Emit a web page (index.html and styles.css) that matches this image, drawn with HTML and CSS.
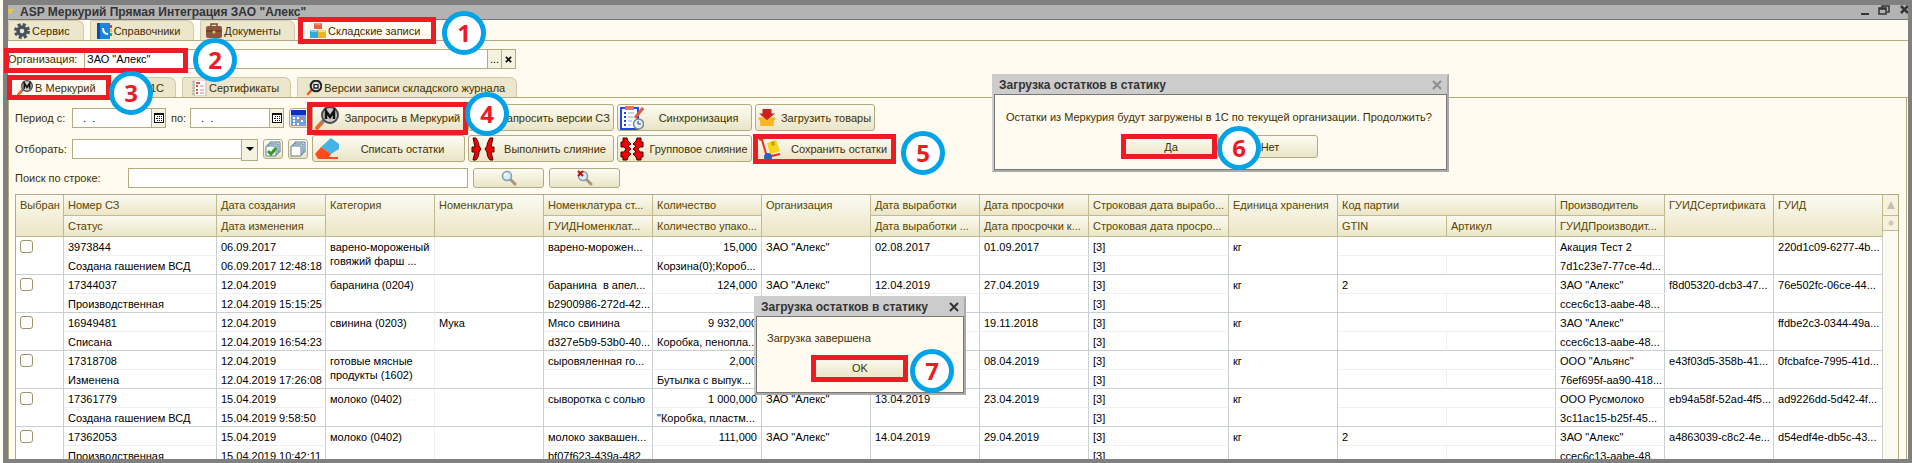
FILE: index.html
```html
<!DOCTYPE html>
<html lang="ru">
<head>
    <meta charset="UTF-8">
    <meta name="viewport" content="width=device-width, initial-scale=1.0">
    <title>ASP Меркурий Прямая Интеграция</title>
    <link rel="stylesheet" href="styles.css">
</head>
<body>
    <!-- Shared icons -->
    <svg class="sprite" aria-hidden="true">
        <symbol id="lens-m" viewBox="0 0 24 24">
            <path d="M9 14 L2 22" stroke="#f26522" stroke-width="4" stroke-linecap="round"/>
            <path d="M9 14 L6 17.500" stroke="#888" stroke-width="3"/>
            <circle cx="15" cy="9" r="8" fill="#c9c9c9" stroke="#4a4a4a" stroke-width="2"/>
            <path d="M11 13 V5 L15 11 L19 5 V13" fill="none" stroke="#111" stroke-width="2.500"/>
        </symbol>
        <symbol id="lens" viewBox="0 0 16 16">
            <path d="M9 9 L14 14" stroke="#a8977c" stroke-width="3" stroke-linecap="round"/>
            <circle cx="6" cy="6" r="4.500" fill="#d6ecfa" stroke="#8a9aa8" stroke-width="1.500"/>
            <path d="M3.500 5.500 A3 3 0 0 1 6 3.500" fill="none" stroke="#fff" stroke-width="1.500"/>
        </symbol>
        <symbol id="calendar" viewBox="0 0 10 10">
            <path d="M0 0 H10 V10 H0 Z" fill="#111"/>
            <path d="M1 2h8v7h-8z" fill="#fff"/>
            <path d="M3 3h1v1h-1z M5 3h1v1h-1z M7 3h1v1h-1z M2 5h1v1h-1z M3 5h1v1h-1z M5 5h1v1h-1z M7 5h1v1h-1z M3 7h1v1h-1z M5 7h1v1h-1z M7 7h1v1h-1z" fill="#111"/>
        </symbol>
        <symbol id="pages" viewBox="0 0 16 16">
            <path d="M5 1 H15 V11 H5 Z" fill="#dbe8f2" stroke="#5b7f9c"/>
            <path d="M3 3 H13 V13 H3 Z" fill="#dbe8f2" stroke="#5b7f9c"/>
            <path d="M1 5 H11 V15 H1 Z" fill="#fff" stroke="#5b7f9c"/>
        </symbol>
    </svg>

    <div class="window">
        <header class="titlebar">
            <svg class="app-icon" viewBox="0 0 8 8"><path d="M0 1 H6 L1 7 Z" fill="#f7c52b"/></svg>
            <h1>ASP Меркурий Прямая Интеграция ЗАО "Алекс"</h1>
            <svg class="window-buttons" viewBox="0 0 48 14">
                <path d="M1 9 H9" stroke="#333" stroke-width="2"/>
                <path d="M22 3 V1 H29 V7 H27 M19 3 H26 V9 H19 Z M19 4 H26" fill="none" stroke="#333" stroke-width="1.500"/>
                <path d="M41 1 L48 8 M48 1 L41 8" stroke="#333" stroke-width="2.500"/>
            </svg>
        </header>

        <!-- Main sections -->
        <nav class="tabs sections">
            <button class="tab">
                <svg class="icon" viewBox="0 0 16 16"><circle cx="8" cy="8" r="6.500" fill="none" stroke="#46535e" stroke-width="3" stroke-dasharray="3 2.100"/><circle cx="8" cy="8" r="4" fill="none" stroke="#46535e" stroke-width="3.500"/></svg>
                Сервис
            </button>
            <button class="tab">
                <svg class="icon" viewBox="0 0 16 16"><path d="M1 0 H14 V16 H1 Z" fill="#1b84e0"/><path d="M1 0 H4 V16 H1 Z" fill="#0c4f9e"/><path d="M14 2 H16 V5 H14 Z" fill="#e33"/><path d="M14 6 H16 V9 H14 Z" fill="#fb2"/><path d="M14 10 H16 V13 H14 Z" fill="#3a4"/><path d="M7 5 C7 9 9 11 12 11" fill="none" stroke="#fff" stroke-width="2"/></svg>
                Справочники
            </button>
            <button class="tab">
                <svg class="icon" viewBox="0 0 16 16"><path d="M5 4 V1 H11 V4" fill="none" stroke="#7a4430" stroke-width="1.500"/><rect y="3" width="16" height="12" rx="2" fill="#8d5540"/><path d="M0 8 H16" stroke="#5e3222"/><circle cx="8" cy="9" r="1.500" fill="#e6c25a"/></svg>
                Документы
            </button>
            <button class="tab active">
                <svg class="icon" viewBox="0 0 16 16"><rect x="4" width="8" height="6" fill="#f0603c"/><path d="M4 0 H12 L10 2 H5 Z" fill="#ff9474"/><rect y="7" width="8" height="8" fill="#2fa8dc"/><path d="M0 7 H8 L7 9 H1 Z" fill="#7ad4f4"/><rect x="8" y="7" width="8" height="8" fill="#eab52c"/><path d="M8 7 H16 L15 9 H9 Z" fill="#ffe17c"/></svg>
                Складские записи
            </button>
        </nav>

        <div class="org">
            <label for="org">Организация:</label>
            <input id="org" class="field" type="text" value='ЗАО "Алекс"'>
            <button class="field-btn">...</button>
            <button class="field-btn" aria-label="Очистить"><svg viewBox="0 0 8 8" width="7" height="7"><path d="M1 1 L7 7 M7 1 L1 7" stroke="#111" stroke-width="2"/></svg></button>
        </div>

        <nav class="tabs">
            <button class="tab active tab-mercury">
                <svg class="icon"><use href="#lens-m"/></svg>
                В Меркурий
            </button>
            <button class="tab tab-1c">В 1С</button>
            <button class="tab">
                <svg class="icon" viewBox="0 0 16 16"><path d="M3 0 H15 V16 H3 Z" fill="#fff" stroke="#c7b6b6"/><path d="M1 2 H4 M1 5 H4 M1 8 H4 M1 11 H4 M1 14 H4" stroke="#999"/><path d="M5 3 H9 M5 6 H7 M5 10 H7 M5 13 H7" stroke="#e2574c" stroke-width="2"/><path d="M9 6 H13 M9 10 H13 M9 13 H13" stroke="#c58a80"/></svg>
                Сертификаты
            </button>
            <button class="tab">
                <svg class="icon" viewBox="0 0 24 24"><path d="M9 14 L3 21" stroke="#f26522" stroke-width="4" stroke-linecap="round"/><circle cx="15" cy="9" r="8" fill="#ddd" stroke="#222" stroke-width="3"/><path d="M12 7 H18 V12 H12 Z" fill="#fff" stroke="#222" stroke-width="2"/></svg>
                Версии записи складского журнала
            </button>
        </nav>

        <main class="panel">
            <div class="toolbar">
                <div class="filters">
                    <div class="filter-row">
                        <label for="date-from">Период с:</label>
                        <span class="date"><input id="date-from" class="field" type="text" value="  .  ."><button class="field-btn" aria-label="Выбрать дату"><svg width="10" height="10"><use href="#calendar"/></svg></button></span>
                        <label class="to" for="date-to">по:</label>
                        <span class="date"><input id="date-to" class="field" type="text" value="  .  ."><button class="field-btn" aria-label="Выбрать дату"><svg width="10" height="10"><use href="#calendar"/></svg></button></span>
                        <button class="btn square" aria-label="Период"><svg class="icon" viewBox="0 0 16 16"><path d="M0 0 H15 V16 H0 Z" fill="#6f9fe8"/><path d="M0 0 H15 V5 H0 Z" fill="#0d2bd0"/><path d="M2 7h2v2h-2z M6 7h2v2h-2z M2 10h2v2h-2z M10 10h2v2h-2z M2 13h2v2h-2z M6 13h2v2h-2z" fill="#fff"/><path d="M10 7h3v2h-3z M6 10h2v2h-2z" fill="#f08030"/></svg></button>
                    </div>
                    <div class="filter-row">
                        <label for="pick">Отборать:</label>
                        <span class="select"><select id="pick" class="field"><option></option></select></span>
                        <button class="btn square" aria-label="Отметить все"><svg class="icon"><use href="#pages"/><path d="M3 10 L6 13 L11 7" fill="none" stroke="#2da21c" stroke-width="3"/></svg></button>
                        <button class="btn square" aria-label="Снять все"><svg class="icon"><use href="#pages"/></svg></button>
                    </div>
                </div>
                <div class="actions">
                    <button class="btn"><svg class="big-icon"><use href="#lens-m"/></svg><span>Запросить в Меркурий</span></button>
                    <button class="btn"><svg class="big-icon"><use href="#lens-m"/></svg><span>Запросить версии СЗ</span></button>
                    <button class="btn"><svg class="big-icon" viewBox="0 0 24 24"><path d="M1 2 H18 V23 H1 Z" fill="#fff" stroke="#2446e8" stroke-width="2"/><path d="M5 0 H14 V4 H5 Z" fill="#f0705c"/><path d="M4 7 H6 M4 11 H6 M4 15 H6 M4 19 H6" stroke="#2446e8" stroke-width="2"/><path d="M8 7 H14 M8 11 H13 M8 15 H12 M8 19 H11" stroke="#8fa0dc"/><path d="M23 2 L15 12" stroke="#e05a32" stroke-width="3"/><circle cx="18.500" cy="18" r="5" fill="#e4f0f8" stroke="#7a8894" stroke-width="1.500"/><path d="M18 15 V18 H21" fill="none" stroke="#345"/></svg><span>Синхронизация</span></button>
                    <button class="btn"><svg class="mid-icon" viewBox="0 0 16 16"><path d="M0 8 L4 7 L8 10 L12 7 L16 8 L14 11 V15 H2 V11 Z" fill="#fbb522"/><path d="M4 0 H12 V4 H15 L8 10 L1 4 H4 Z" fill="#cf2020"/></svg><span>Загрузить товары</span></button>
                    <button class="btn"><svg class="big-icon" viewBox="0 0 24 24"><path d="M16 1 L24 7 V12 L16 17 L6 10 Z" fill="#44b3e8"/><path d="M6 10 L16 17 L14 20 H23 V22 H3 L0 17 Z" fill="#fc4c1d"/></svg><span>Списать остатки</span></button>
                    <button class="btn"><svg class="big-icon" viewBox="0 0 24 24"><path d="M2 1 H5 C7 4 8 7 8 9 L10 12 L8 15 C8 18 7 21 5 23 H2 L4 15 H1 V10 H4 Z M22 1 H19 C17 4 16 7 16 9 L14 12 L16 15 C16 18 17 21 19 23 H22 L20 15 H23 V10 H20 Z" fill="#f00000" stroke="#400"/></svg><span>Выполнить слияние</span></button>
                    <button class="btn"><svg class="big-icon" viewBox="0 0 24 24"><path d="M3 1 H7 L8 4 L11 7 L8 9 L11 12 L8 15 L11 17 L8 20 L7 23 H3 V20 H1 V15 H4 L6 12 L4 10 H1 V5 H3 Z M21 1 H17 L16 4 L13 7 L16 9 L13 12 L16 15 L13 17 L16 20 L17 23 H21 V20 H23 V15 H20 L18 12 L20 10 H23 V5 H21 Z" fill="#f00000" stroke="#400"/></svg><span>Групповое слияние</span></button>
                    <button class="btn save"><svg class="big-icon" viewBox="0 0 24 24"><path d="M1 2 L4 3 L9 20 L22 17" fill="none" stroke="#ef2b1c" stroke-width="2"/><path d="M9 6 L18 3 L22 14 L12 17 Z" fill="#f7d414"/><path d="M13 5 L16 4 L17 8 L14 9 Z" fill="#c79a10"/><circle cx="10" cy="20" r="4" fill="#2560c4"/></svg><span>Сохранить остатки</span></button>
                </div>
            </div>

            <div class="search">
                <label for="search">Поиск по строке:</label>
                <input id="search" class="field" type="text">
                <button class="btn" aria-label="Найти"><svg class="icon"><use href="#lens"/></svg></button>
                <button class="btn" aria-label="Сбросить поиск"><svg class="icon"><use href="#lens"/><path d="M1 1 L6 6 M6 1 L1 6" stroke="#c00c0c" stroke-width="2"/></svg></button>
            </div>

            <!-- Stock journal -->
            <div class="grid">
                <table>
                    <colgroup>
                        <col class="c-check"><col class="c-number"><col span="8"><col class="c-string"><col span="6">
                    </colgroup>
                    <thead>
                        <tr>
                            <th rowspan="2">Выбран</th><th>Номер СЗ</th><th>Дата создания</th><th rowspan="2">Категория</th><th rowspan="2">Номенклатура</th><th>Номенклатура ст...</th><th>Количество</th><th rowspan="2">Организация</th><th>Дата выработки</th><th>Дата просрочки</th><th>Строковая дата вырабо...</th><th rowspan="2">Единица хранения</th><th colspan="2">Код партии</th><th>Производитель</th><th rowspan="2">ГУИДСертификата</th><th rowspan="2">ГУИД</th>
                        </tr>
                        <tr>
                            <th>Статус</th><th>Дата изменения</th><th>ГУИДНоменклат...</th><th>Количество упако...</th><th>Дата выработки ...</th><th>Дата просрочки к...</th><th>Строковая дата просро...</th><th>GTIN</th><th>Артикул</th><th>ГУИДПроизводит...</th>
                        </tr>
                    </thead>
                    <tbody>
                        <tr>
                            <td rowspan="2"><input type="checkbox" aria-label="3973844"></td><td>3973844</td><td>06.09.2017</td><td rowspan="2" class="wrap">варено-мороженый говяжий фарш ...</td><td rowspan="2"></td><td>варено-морожен...</td><td class="num">15,000</td><td rowspan="2">ЗАО "Алекс"</td><td>02.08.2017</td><td>01.09.2017</td><td>[3]</td><td rowspan="2">кг</td><td colspan="2"></td><td>Акация Тест 2</td><td rowspan="2"></td><td rowspan="2">220d1c09-6277-4b...</td>
                        </tr>
                        <tr>
                            <td>Создана гашением ВСД</td><td>06.09.2017 12:48:18</td><td></td><td>Корзина(0);Короб...</td><td></td><td></td><td>[3]</td><td class="light"></td><td></td><td>7d1c23e7-77ce-4d...</td>
                        </tr>
                        <tr>
                            <td rowspan="2"><input type="checkbox" aria-label="17344037"></td><td>17344037</td><td>12.04.2019</td><td rowspan="2" class="wrap">баранина (0204)</td><td rowspan="2"></td><td>баранина&nbsp; в апел...</td><td class="num">124,000</td><td rowspan="2">ЗАО "Алекс"</td><td>12.04.2019</td><td>27.04.2019</td><td>[3]</td><td rowspan="2">кг</td><td colspan="2">2</td><td>ЗАО "Алекс"</td><td rowspan="2">f8d05320-dcb3-47...</td><td rowspan="2">76e502fc-06ce-44...</td>
                        </tr>
                        <tr>
                            <td>Производственная</td><td>12.04.2019 15:15:25</td><td>b2900986-272d-42...</td><td></td><td></td><td></td><td>[3]</td><td class="light"></td><td></td><td>ccec6c13-aabe-48...</td>
                        </tr>
                        <tr>
                            <td rowspan="2"><input type="checkbox" aria-label="16949481"></td><td>16949481</td><td>12.04.2019</td><td rowspan="2" class="wrap">свинина (0203)</td><td rowspan="2">Мука</td><td>Мясо свинина</td><td class="num">9 932,000</td><td rowspan="2"></td><td></td><td>19.11.2018</td><td>[3]</td><td rowspan="2">кг</td><td colspan="2"></td><td>ЗАО "Алекс"</td><td rowspan="2"></td><td rowspan="2">ffdbe2c3-0344-49a...</td>
                        </tr>
                        <tr>
                            <td>Списана</td><td>12.04.2019 16:54:23</td><td>d327e5b9-53b0-40...</td><td>Коробка, пенопла...</td><td></td><td></td><td>[3]</td><td class="light"></td><td></td><td>ccec6c13-aabe-48...</td>
                        </tr>
                        <tr>
                            <td rowspan="2"><input type="checkbox" aria-label="17318708"></td><td>17318708</td><td>12.04.2019</td><td rowspan="2" class="wrap">готовые мясные продукты (1602)</td><td rowspan="2"></td><td>сыровяленная го...</td><td class="num">2,000</td><td rowspan="2"></td><td></td><td>08.04.2019</td><td>[3]</td><td rowspan="2">кг</td><td colspan="2"></td><td>ООО "Альянс"</td><td rowspan="2">e43f03d5-358b-41...</td><td rowspan="2">0fcbafce-7995-41d...</td>
                        </tr>
                        <tr>
                            <td>Изменена</td><td>12.04.2019 17:26:08</td><td></td><td>Бутылка с выпук...</td><td></td><td></td><td>[3]</td><td class="light"></td><td></td><td>76ef695f-aa90-418...</td>
                        </tr>
                        <tr>
                            <td rowspan="2"><input type="checkbox" aria-label="17361779"></td><td>17361779</td><td>15.04.2019</td><td rowspan="2" class="wrap">молоко (0402)</td><td rowspan="2"></td><td>сыворотка с солью</td><td class="num">1 000,000</td><td rowspan="2">ЗАО "Алекс"</td><td>13.04.2019</td><td>23.04.2019</td><td>[3]</td><td rowspan="2">кг</td><td colspan="2"></td><td>ООО Русмолоко</td><td rowspan="2">eb94a58f-52ad-4f5...</td><td rowspan="2">ad9226dd-5d42-4f...</td>
                        </tr>
                        <tr>
                            <td>Создана гашением ВСД</td><td>15.04.2019 9:58:50</td><td></td><td>"Коробка, пластм...</td><td></td><td></td><td>[3]</td><td class="light"></td><td></td><td>3c11ac15-b25f-45...</td>
                        </tr>
                        <tr>
                            <td rowspan="2"><input type="checkbox" aria-label="17362053"></td><td>17362053</td><td>15.04.2019</td><td rowspan="2" class="wrap">молоко (0402)</td><td rowspan="2"></td><td>молоко заквашен...</td><td class="num">111,000</td><td rowspan="2">ЗАО "Алекс"</td><td>14.04.2019</td><td>29.04.2019</td><td>[3]</td><td rowspan="2">кг</td><td colspan="2">2</td><td>ЗАО "Алекс"</td><td rowspan="2">a4863039-c8c2-4e...</td><td rowspan="2">d54edf4e-db5c-43...</td>
                        </tr>
                        <tr>
                            <td>Производственная</td><td>15.04.2019 10:42:11</td><td>bf07f623-439a-482...</td><td></td><td></td><td></td><td>[3]</td><td class="light"></td><td></td><td>ccec6c13-aabe-48...</td>
                        </tr>
                    </tbody>
                </table>
                <div class="scrollbar">
                    <div class="scroll-btn"><svg width="8" height="8" viewBox="0 0 8 8"><path d="M4 0 L8 8 H0 Z" fill="#c4c0ac"/></svg></div>
                    <div class="scroll-btn thumb"><svg width="6" height="6" viewBox="0 0 6 6"><circle cx="3" cy="3" r="2.500" fill="#cdc8ae"/></svg></div>
                </div>
            </div>
        </main>
    </div>

    <!-- Message windows -->
    <div class="dialog dialog-confirm" role="dialog" aria-labelledby="confirm-title">
        <div class="dialog-title"><h2 id="confirm-title">Загрузка остатков в статику</h2><button class="close" aria-label="Закрыть"><svg width="10" height="10" viewBox="0 0 10 10"><path d="M1 1 L9 9 M9 1 L1 9" stroke="#8c8c8c" stroke-width="2"/></svg></button></div>
        <div class="dialog-body">
            <p>Остатки из Меркурия будут загружены в 1С по текущей организации. Продолжить?</p>
            <div class="dialog-buttons"><button class="btn">Да</button><button class="btn">Нет</button></div>
        </div>
    </div>
    <div class="dialog dialog-done" role="dialog" aria-labelledby="done-title">
        <div class="dialog-title"><h2 id="done-title">Загрузка остатков в статику</h2><button class="close" aria-label="Закрыть"><svg width="10" height="10" viewBox="0 0 10 10"><path d="M1 1 L9 9 M9 1 L1 9" stroke="#333" stroke-width="2"/></svg></button></div>
        <div class="dialog-body">
            <p>Загрузка завершена</p>
            <div class="dialog-buttons"><button class="btn">OK</button></div>
        </div>
    </div>

    <!-- Step frames and numbers -->
    <div class="frame frame-1"></div>
    <div class="frame frame-2"></div>
    <div class="frame frame-3"></div>
    <div class="frame frame-4"></div>
    <div class="frame frame-5"></div>
    <div class="frame frame-6"></div>
    <div class="frame frame-7"></div>
    <div class="step step-1">1</div>
    <div class="step step-2">2</div>
    <div class="step step-3">3</div>
    <div class="step step-4">4</div>
    <div class="step step-5">5</div>
    <div class="step step-6">6</div>
    <div class="step step-7">7</div>
</body>
</html>
```
FILE: styles.css
```css
* {
    box-sizing: border-box;
}
body {
    margin: 0;
    background-color: #fffbf0;
    color: #3f3000;
    font-family: "Liberation Sans", Arial, sans-serif;
    font-size: 11px;
    line-height: 14px;
    overflow: hidden;
}
button, input, select {
    margin: 0;
    padding: 0;
    color: inherit;
    font: inherit;
}
h1, h2, p {
    margin: 0;
}
svg {
    flex: none;
}
.sprite {
    position: absolute;
    width: 0;
    height: 0;
}
.window {
    display: flex;
    flex-direction: column;
    height: 100vh;
    margin-left: 3px;
    border: 5px solid #808080;
    border-width: 5px 4px 4px 5px;
    overflow: hidden;
}
.titlebar {
    display: flex;
    flex: none;
    align-items: center;
    height: 15px;
    background-color: #b3b3b3;
    border-bottom: 1px solid #777;
}
.titlebar h1 {
    flex: 1;
    color: #333;
    font-size: 12px;
    line-height: 14px;
}
.app-icon {
    width: 8px;
    height: 8px;
    margin-right: 4px;
}
.window-buttons {
    width: 48px;
    height: 14px;
}

/* Tabs */
.tabs {
    display: flex;
    flex: none;
    gap: 6px;
    height: 21px;
    border-bottom: 1px solid #b3ab7d;
}
.tab {
    display: flex;
    align-items: center;
    gap: 2px;
    padding: 0 11px 0 8px;
    background-color: #ece6cc;
    border: 1px solid #d2caa6;
    border-bottom: none;
    border-radius: 2px 7px 0 0;
    white-space: nowrap;
}
.sections .tab {
    padding: 0 13px 0 5px;
}
.tab.active {
    height: 21px;
    padding-left: 8px;
    background-color: #fffbf0;
}
.tab-1c {
    justify-content: flex-end;
    width: 62px;
}
.tab-mercury {
    width: 100px;
}
.icon {
    width: 16px;
    height: 16px;
}
.mid-icon {
    width: 18px;
    height: 18px;
}
.big-icon {
    width: 24px;
    height: 24px;
}

/* Fields */
.field {
    height: 20px;
    padding: 0 2px;
    background-color: #fff;
    border: 1px solid #b3ab7d;
    border-radius: 0;
    color: #000;
    outline: none;
}
.field-btn {
    display: flex;
    flex: none;
    align-items: center;
    justify-content: center;
    width: 15px;
    height: 20px;
    margin-left: -1px;
    background-color: #f5f2e0;
    border: 1px solid #b3ab7d;
    color: #000;
}
.org {
    display: flex;
    flex: none;
    align-items: center;
    margin: 8px 0 8px;
}
.org label {
    width: 76px;
}
.org .field {
    width: 404px;
}
.panel {
    display: flex;
    flex: 1;
    flex-direction: column;
    min-height: 0;
    margin-right: 1px;
    padding: 6px 7px 0 6px;
    border: 1px solid #b3ab7d;
    border-width: 0 1px;
}
.toolbar {
    display: flex;
    gap: 4px;
}
.filters {
    display: grid;
    gap: 4px;
    width: 293px;
}
.filter-row {
    display: flex;
    align-items: center;
    gap: 5px;
    height: 27px;
}
.filter-row label {
    width: 52px;
}
.filter-row .to {
    width: 14px;
}
.date {
    display: flex;
    width: 94px;
}
.date .field {
    width: 80px;
    padding-left: 4px;
    white-space: pre;
}
.select {
    position: relative;
}
.select .field {
    display: block;
    width: 186px;
    appearance: none;
}
.select::after {
    content: "";
    position: absolute;
    top: 0;
    right: 0;
    width: 15px;
    height: 20px;
    background-color: #f5f2e0;
    border: 1px solid #b3ab7d;
    pointer-events: none;
}
.select::before {
    content: "";
    position: absolute;
    z-index: 1;
    top: 8px;
    right: 4px;
    border: 4px solid transparent;
    border-top: 4px solid #000;
    border-bottom: none;
    pointer-events: none;
}
.btn {
    display: flex;
    align-items: center;
    justify-content: center;
    gap: 4px;
    padding: 0 2px;
    background-image: linear-gradient(#fdfcf3, #f3f0dc 50%, #e9e5c8);
    border: 1px solid #b3ab7d;
    border-radius: 3px;
    white-space: nowrap;
}
.btn span {
    flex: 1;
    text-align: center;
}
.square {
    width: 20px;
    height: 20px;
    padding: 0;
}
.actions {
    display: grid;
    grid-template-columns: 153px 146px 135px auto;
    grid-auto-rows: 27px;
    gap: 4px 3px;
}
.actions .btn:nth-child(4) {
    width: 120px;
}
.actions .save {
    width: 140px;
}
.search {
    display: flex;
    gap: 5px;
    margin: 6px 0 6px;
}
.search label {
    width: 108px;
    line-height: 20px;
}
.search .field {
    width: 340px;
}
.search .btn {
    width: 71px;
}

/* Journal table */
.grid {
    display: flex;
    flex: 1;
    align-items: stretch;
    min-height: 0;
    background-color: #fff;
    border: 1px solid #b3ab7d;
    border-bottom: none;
    overflow: hidden;
}
table {
    flex: 1;
    align-self: flex-start;
    width: 100%;
    border-spacing: 0;
    table-layout: fixed;
}
col {
    width: 109px;
}
.c-check {
    width: 48px;
}
.c-number {
    width: 153px;
}
.c-string {
    width: 140px;
}
th, td {
    height: 19px;
    padding: 3px 4px 0;
    border-right: 1px solid #c8d0d4;
    border-bottom: 1px solid #f0f0f0;
    overflow: hidden;
    text-align: left;
    vertical-align: top;
    white-space: nowrap;
}
th {
    height: 21px;
    background-image: linear-gradient(#fafaf2, #ece6c6);
    border-color: #c2b98c;
    color: #5a4500;
    font-weight: normal;
}
td {
    color: #000;
}
td[rowspan], tbody tr:nth-child(even) td {
    border-bottom-color: #c8d0d4;
}
tbody tr:nth-child(even) .light, td.wrap {
    border-right-color: #f0f0f0;
}
td.wrap {
    white-space: normal;
}
td.num {
    text-align: right;
}
td input {
    display: block;
    width: 13px;
    height: 13px;
    background-color: #fff;
    border: 1px solid #9c9468;
    border-radius: 3px;
    appearance: none;
}
.scrollbar {
    flex: none;
    width: 16px;
    background-color: #fbf9f0;
}
.scroll-btn {
    display: flex;
    align-items: center;
    justify-content: center;
    height: 21px;
    background-color: #f5f2e0;
    border-bottom: 1px solid #c2b98c;
}
.thumb {
    height: 15px;
}

/* Dialogs */
.dialog {
    position: absolute;
    background-color: #ccc;
    border: 2px solid #ccc;
    border-right-color: #aaa;
    border-bottom-color: #aaa;
}
.dialog-confirm {
    top: 74px;
    left: 992px;
    width: 457px;
}
.dialog-done {
    top: 296px;
    left: 754px;
    width: 212px;
}
.dialog-title {
    display: flex;
    align-items: center;
    justify-content: space-between;
    height: 18px;
    padding: 0 5px;
}
.dialog-title h2 {
    color: #333;
    font-size: 12px;
}
.close {
    display: flex;
    background: none;
    border: none;
}
.dialog-body {
    padding: 15px 11px 11px;
    background-color: #fffbf0;
    border: 1px solid #777;
}
.dialog-buttons {
    display: flex;
    gap: 3px;
    justify-content: center;
    margin-top: 11px;
}
.dialog-buttons .btn {
    width: 96px;
    height: 23px;
}
.dialog-done .dialog-body {
    padding: 14px 10px 13px;
}

/* Steps */
.frame {
    position: absolute;
    border: 5px solid #ed1c24;
}
.frame-1 { top: 17px; left: 298px; width: 138px; height: 27px; }
.frame-2 { top: 48px; left: 4px; width: 184px; height: 25px; }
.frame-3 { top: 75px; left: 7px; width: 104px; height: 25px; }
.frame-4 { top: 102px; left: 307px; width: 161px; height: 33px; }
.frame-5 { top: 134px; left: 753px; width: 143px; height: 30px; }
.frame-6 { top: 134px; left: 1121px; width: 96px; height: 25px; }
.frame-7 { top: 355px; left: 811px; width: 97px; height: 27px; }
.step {
    position: absolute;
    width: 44px;
    height: 44px;
    background-color: #fff;
    border: 5px solid #00a2e8;
    border-radius: 50%;
    color: #ed1c24;
    font: bold 24px/34px "Open Sans", sans-serif;
    text-align: center;
}
.step-1 { top: 11px; left: 442px; }
.step-2 { top: 38px; left: 193px; }
.step-3 { top: 71px; left: 109px; }
.step-4 { top: 92px; left: 465px; }
.step-5 { top: 131px; left: 901px; }
.step-6 { top: 126px; left: 1217px; }
.step-7 { top: 349px; left: 910px; }
```
